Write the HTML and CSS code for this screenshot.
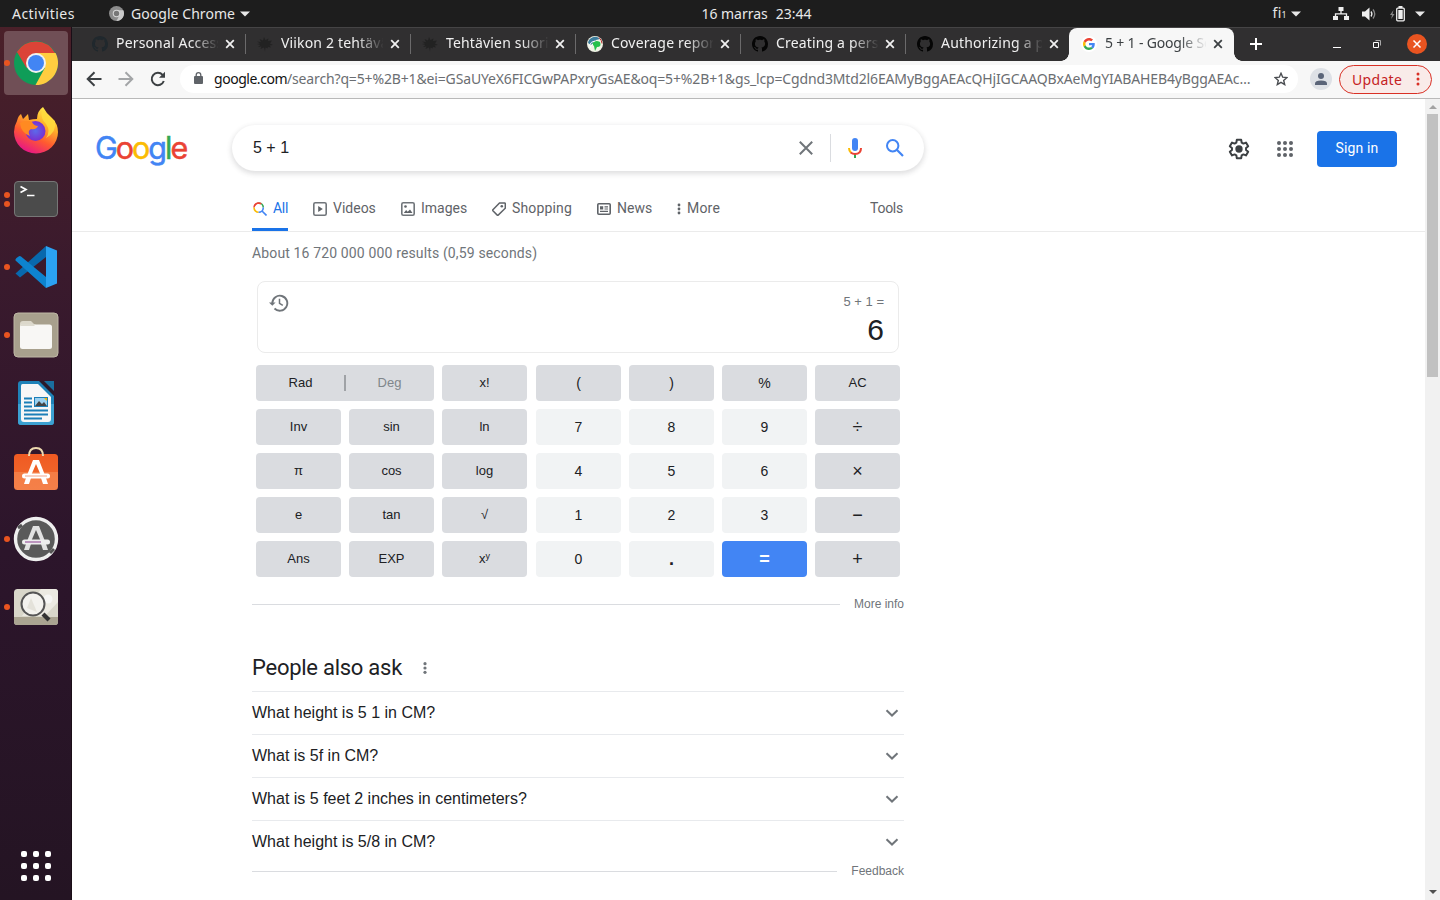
FILE: index.html
```
<!DOCTYPE html>
<html lang="en">
<head>
<meta charset="utf-8">
<title>5 + 1 - Google Search</title>
<link rel="stylesheet" href="styles.css">
</head>
<body>
<svg width="0" height="0" class="defs">
  <defs>
    <symbol id="x" viewBox="0 0 10 10"><path d="M1.200 1.200l7.600 7.600M8.800 1.200L1.200 8.800" stroke="currentColor" stroke-width="1.800" fill="none"/></symbol>
    <symbol id="github" viewBox="0 0 16 16"><path fill="currentColor" d="M8 0C3.58 0 0 3.58 0 8c0 3.54 2.29 6.53 5.47 7.59.4.07.55-.17.55-.38 0-.19-.01-.82-.01-1.49-2.01.37-2.53-.49-2.69-.94-.09-.23-.48-.94-.82-1.13-.28-.15-.68-.52-.01-.53.63-.01 1.08.58 1.23.82.72 1.21 1.87.87 2.33.66.07-.52.28-.87.51-1.07-1.78-.2-3.64-.89-3.64-3.95 0-.87.31-1.59.82-2.15-.08-.2-.36-1.02.08-2.12 0 0 .67-.21 2.2.82.64-.18 1.32-.27 2-.27s1.36.09 2 .27c1.53-1.04 2.2-.82 2.2-.82.44 1.1.16 1.92.08 2.12.51.56.82 1.27.82 2.15 0 3.07-1.87 3.75-3.65 3.95.29.25.54.73.54 1.48 0 1.07-.01 1.93-.01 2.2 0 .21.15.46.55.38A8.01 8.01 0 0016 8c0-4.42-3.58-8-8-8z"/></symbol>
    <symbol id="splat" viewBox="0 0 16 16"><path fill="currentColor" d="M0 5.500l4 .5L2.500 3 6 4.500 7 1l1.500 3 3-1.500L11 5l4-.5-2 3 3 1.500-3.500.5 1.500 2-3-.5-.5 1.500-2-1L8 15.500l-1-4L3.500 13l1-2.500L1 11l2.500-2L0 8l3-.5z"/></symbol>
    <symbol id="chev" viewBox="0 0 14 8"><path d="M1.500 1.200L7 6.500l5.500-5.300" fill="none" stroke="#70757a" stroke-width="2"/></symbol>
    <symbol id="tri" viewBox="0 0 10 6"><path d="M0 .5h10L5 5.500z" fill="currentColor"/></symbol>
    <symbol id="gee" viewBox="0 0 48 48">
      <path fill="#EA4335" d="M24 9.500c3.540 0 6.710 1.220 9.210 3.600l6.850-6.850C35.900 2.380 30.470 0 24 0 14.620 0 6.510 5.380 2.560 13.220l7.980 6.190C12.430 13.720 17.740 9.500 24 9.500z"/>
      <path fill="#4285F4" d="M46.980 24.550c0-1.570-.15-3.090-.38-4.550H24v9.020h12.940c-.58 2.960-2.260 5.480-4.780 7.180l7.730 6c4.510-4.180 7.090-10.360 7.090-17.650z"/>
      <path fill="#FBBC05" d="M10.530 28.590c-.48-1.450-.76-2.990-.76-4.590s.27-3.140.76-4.590l-7.980-6.190C.92 16.460 0 20.120 0 24c0 3.880.92 7.540 2.560 10.780l7.970-6.190z"/>
      <path fill="#34A853" d="M24 48c6.480 0 11.930-2.130 15.890-5.810l-7.730-6c-2.150 1.450-4.920 2.300-8.160 2.300-6.260 0-11.570-4.220-13.470-9.910l-7.980 6.190C6.510 42.620 14.620 48 24 48z"/>
    </symbol>
    <linearGradient id="ff" x1=".8" y1="0" x2=".3" y2="1"><stop offset="0" stop-color="#fff44f"/><stop offset=".35" stop-color="#ffb02a"/><stop offset=".65" stop-color="#ff5a30"/><stop offset="1" stop-color="#e5128c"/></linearGradient>
    <radialGradient id="ffp"><stop offset="0" stop-color="#5b6bea"/><stop offset="1" stop-color="#7a2fd0"/></radialGradient>
    <linearGradient id="store" x1="0" y1="0" x2="0" y2="1"><stop offset="0" stop-color="#f05a22"/><stop offset=".5" stop-color="#f06329"/><stop offset=".51" stop-color="#f47d45"/><stop offset="1" stop-color="#f48049"/></linearGradient>
  </defs>
</svg>

<header class="topbar">
  <div class="tb-left"><span class="activities">Activities</span>
    <svg class="tb-chrome" width="15" height="15" viewBox="0 0 16 16"><circle cx="8" cy="8" r="8" fill="#8c8c8c"/><path d="M8 4.500h7.200A8 8 0 018 16l3-6z" fill="#c9c9c9"/><circle cx="8" cy="8" r="4" fill="#d8d8d8"/><circle cx="8" cy="8" r="2.900" fill="#777"/></svg>
    <span class="appname">Google Chrome</span><svg width="10" height="6"><use href="#tri"/></svg></div>
  <div class="clock"><span>16 marras</span><span>23:44</span></div>
  <div class="tb-right">
    <span class="lang">fi<small>1</small></span><svg class="t1" width="10" height="6"><use href="#tri"/></svg>
    <svg class="net" width="16" height="14" viewBox="0 0 16 14"><path d="M5.500 0h5v4h-5zM0 9h5v4H0zM11 9h5v4h-5z" fill="#eee"/><path d="M8 4v3M2.500 9V6.800h11V9" stroke="#eee" fill="none" stroke-width="1.300"/></svg>
    <svg class="vol" width="15" height="14" viewBox="0 0 15 14"><path d="M0 4.500h3L7.500 .5v13L3 9.500H0z" fill="#eee"/><path d="M9 4.500q1.800 2.500 0 5" stroke="#eee" fill="none" stroke-width="1.300"/><path d="M11 2.500q3.500 4.500 0 9" stroke="#888" fill="none" stroke-width="1.300"/></svg>
    <svg class="bat" width="16" height="16" viewBox="0 0 16 16"><path d="M3.500 4L0 9h2l-.8 4L4.500 8h-2z" fill="#888"/><rect x="6.700" y="2.200" width="7.600" height="12.600" rx="1" fill="none" stroke="#eee" stroke-width="1.300"/><path d="M8.500 0h4v2h-4zM8.300 4h4.400v9H8.300z" fill="#eee"/></svg>
    <svg width="10" height="6"><use href="#tri"/></svg>
  </div>
</header>

<div class="desk">
  <nav class="dock">
    <div class="app on"><i class="dots"><b></b></i>
      <svg width="46" height="46" viewBox="0 0 46 46"><circle cx="23" cy="23" r="22" fill="#0f9d58"/><path d="M23 23L3.900 12A22 22 0 0142.100 13z" fill="#db4437"/><path d="M23 13h19.600A22 22 0 0122.500 45l9.300-17z" fill="#ffcd40"/><path d="M4 12l9.500 16L23 13z" fill="#db4437"/><circle cx="23" cy="23" r="10" fill="#f1f1f1"/><circle cx="23" cy="23" r="8" fill="#4285f4"/></svg></div>
    <div class="app">
      <svg width="46" height="48" viewBox="0 0 46 48"><path d="M4 14q1-5 4-7l2 5 5-5 1 6q4-1 8-1 0-8 6-12 3 6 9 11 6 6 6 14a22 21.500 0 01-44 0q0-6 3-11z" fill="url(#ff)"/><circle cx="22.500" cy="24" r="10" fill="url(#ffp)"/><path d="M7 16q6-4 12-1 2 4 6 4-2 4-7 3-4 2-1 7-9-3-10-13z" fill="#ff8a22"/><path d="M29 3q-2 8 4 14 5 7 0 14 11-6 9-17-5-4-13-11z" fill="#ffdc3d" opacity=".85"/></svg></div>
    <div class="app"><i class="dots"><b></b><b></b></i>
      <svg width="46" height="38" viewBox="0 0 46 38"><rect x="1.500" y="1.500" width="43" height="35" rx="3.500" fill="#4b4b4b" stroke="#777"/><path d="M7.500 6.500l5.500 3-5.500 3" stroke="#fff" stroke-width="1.700" fill="none"/><path d="M14 15.500h7.500" stroke="#fff" stroke-width="1.500"/></svg></div>
    <div class="app"><i class="dots"><b></b></i>
      <svg width="44" height="44" viewBox="0 0 44 44"><path d="M1.500 28.500L32 1v11L6 32.500z" fill="#0868ad"/><path d="M1.500 15.500Q1 14 2.500 13L5 11.300q1-.6 2 .2L32 32v11z" fill="#0d83cf"/><path d="M32 1l11 4.500v33L32 43z" fill="#2ba2f2"/></svg></div>
    <div class="app"><i class="dots"><b></b></i>
      <svg width="46" height="46" viewBox="0 0 46 46"><rect x="1" y="1" width="44" height="44" rx="4" fill="#a8a08d" stroke="#beb7a5"/><path d="M7 12q0-3 3-3h8l4 4v6H7z" fill="#dcd8cb"/><rect x="7" y="12.500" width="32" height="24.500" rx="2.500" fill="#f8f7f5"/><path d="M7 14h14l2-2H9z" fill="#dedbd0"/></svg></div>
    <div class="app">
      <svg width="38" height="46" viewBox="0 0 38 46"><path d="M4 1h19l14 14v27q0 3-3 3H4q-3 0-3-3V4q0-3 3-3z" fill="#1f82b8"/><path d="M1 24v18q0 3 3 3h30q3 0 3-3V24z" fill="#3ca1d2"/><path d="M5.500 4H21l13 13v22q0 3-3 3H7q-3 0-3-3V6q0-2 1.500-2z" fill="#f7f7f7"/><path d="M22 1l15 15V12L26 1z" fill="#2a1a2b"/><path d="M27 1h10v10z" fill="#1a6f9f"/><g stroke="#1b7fb8" stroke-width="1.900"><path d="M7 18.500h8M7 22.500h8M7 26.500h8M7 30.500h24M7 34.500h24M7 38.500h18"/></g><rect x="17.500" y="17.500" width="13" height="9" fill="#9ad0ef" stroke="#1b7fb8"/><path d="M18 26l4-5 3 3 2-2 3 4z" fill="#444"/><path d="M27 18h3v3z" fill="#f4b400"/></svg></div>
    <div class="app">
      <svg class="bag" width="46" height="44" viewBox="0 0 46 44"><rect x="1" y="7" width="44" height="36" rx="3.500" fill="url(#store)"/><path d="M16 9q0-8 7-8t7 8" fill="none" stroke="#ecd9ae" stroke-width="2"/><path d="M20 13h6l5.500 14h-4.200L23 17l-4.300 10h-4.200zM13 31h5l-2 6h-5zM28 31h5l2 6h-5z" fill="#fff"/><rect x="9" y="26.500" width="28" height="5" rx="2.500" fill="#fff"/><path d="M12 29h22" stroke="#f2a58a"/></svg></div>
    <div class="app"><i class="dots"><b></b></i>
      <svg width="46" height="46" viewBox="0 0 46 46"><circle cx="23" cy="23" r="20.500" fill="#5a5a5a" stroke="#efefef" stroke-width="3.400"/><path d="M5 12l4-3M37 37l4-4" stroke="#555" stroke-width="3"/><path d="M20 10h6l5.500 14h-4.200L23 14l-4.300 10h-4.200zM13 28h5l-2 6h-5zM28 28h5l2 6h-5z" fill="#e2e2e2"/><rect x="9" y="23.500" width="28" height="5" rx="2.500" fill="#eee"/><path d="M12 26h16" stroke="#8a3c8f"/></svg></div>
    <div class="app"><i class="dots"><b></b></i>
      <svg width="46" height="38" viewBox="0 0 46 38"><rect x="1" y="1" width="44" height="36" rx="3.500" fill="#d9d7ca"/><path d="M28 1h14q3 0 3 3v10L32 28H9z" fill="#eceae2"/><path d="M1 29h44v5q0 3-3 3H4q-3 0-3-3z" fill="#aaa491"/><circle cx="35" cy="11" r="4.500" fill="#f6f6f4"/><circle cx="20" cy="16" r="11.500" fill="#f3f2ee" stroke="#555" stroke-width="2"/><path d="M30 26l6 6" stroke="#333" stroke-width="4.200"/><path d="M14 20l4-10 6 14z" fill="#e4e2da"/></svg></div>
    <svg class="grid9" width="32" height="32" viewBox="0 0 32 32" fill="#fff"><g id="gr"><rect x="1" y="1" width="6" height="6" rx="2"/><rect x="13" y="1" width="6" height="6" rx="2"/><rect x="25" y="1" width="6" height="6" rx="2"/></g><use href="#gr" y="12"/><use href="#gr" y="24"/></svg>
  </nav>

  <div class="win">
    <div class="tabs">
      <div class="tab"><svg class="fav dim" width="16" height="16"><use href="#github"/></svg><span class="tt">Personal Access</span><svg class="cl" width="10" height="10"><use href="#x"/></svg></div>
      <div class="tab"><svg class="fav dim2" width="16" height="16"><use href="#splat"/></svg><span class="tt">Viikon 2 tehtävä</span><svg class="cl" width="10" height="10"><use href="#x"/></svg></div>
      <div class="tab"><svg class="fav dim2" width="16" height="16"><use href="#splat"/></svg><span class="tt t3">Tehtävien suori</span><svg class="cl" width="10" height="10"><use href="#x"/></svg></div>
      <div class="tab"><svg class="fav" width="16" height="16" viewBox="0 0 16 16"><circle cx="8" cy="8" r="8" fill="#f1f3e6"/><path d="M1 7a7 7 0 0112-4L9 4 4 9z" fill="#3c7d9d"/><path d="M5 8q3-5 8-2 2 5-3 5l-2 4-1-5z" fill="#26c04b"/><path d="M2 10q2-5 6-5M3 12q1-3 3-4" stroke="#fff" fill="none"/><path d="M12 1.500q3 3 3 6" stroke="#b33" fill="none"/></svg><span class="tt">Coverage report</span><svg class="cl" width="10" height="10"><use href="#x"/></svg></div>
      <div class="tab"><svg class="fav blk" width="16" height="16"><use href="#github"/></svg><span class="tt t5">Creating a perso</span><svg class="cl" width="10" height="10"><use href="#x"/></svg></div>
      <div class="tab nos"><svg class="fav blk" width="16" height="16"><use href="#github"/></svg><span class="tt t6">Authorizing a pe</span><svg class="cl" width="10" height="10"><use href="#x"/></svg></div>
      <div class="tab active"><svg class="fav" width="16" height="16" viewBox="0 0 16 16"><circle cx="8" cy="8" r="8" fill="#fff"/><svg x="2" y="2" width="12" height="12"><use href="#gee"/></svg></svg><span class="tt t7">5 + 1 - Google Se</span><svg class="cl" width="10" height="10"><use href="#x"/></svg></div>
      <svg class="plus" width="12" height="12" viewBox="0 0 12 12"><path d="M6 0v12M0 6h12" stroke="#fff" stroke-width="2"/></svg>
      <svg class="wmin" width="8" height="12" viewBox="0 0 8 12"><path d="M0 8.500h8" stroke="#fff"/></svg>
      <svg class="wmax" width="8" height="8" viewBox="0 0 8 8" fill="none"><path d="M.5 2.500h5v5h-5z" stroke="#fff"/><path d="M2.500.5h5v5" stroke="#aaa"/></svg>
      <svg class="wclose" width="20" height="20" viewBox="0 0 20 20"><circle cx="10" cy="10" r="10" fill="#e95420"/><path d="M6.500 6.500l7 7M13.500 6.500l-7 7" stroke="#fff" stroke-width="1.500"/></svg>
    </div>
    <div class="toolbar">
      <svg class="back" width="16" height="16" viewBox="0 0 16 16"><path d="M15.500 8H2M8.500 1.200L1.700 8l6.800 6.800" fill="none" stroke="#3c4043" stroke-width="2"/></svg>
      <svg class="fwd" width="16" height="16" viewBox="0 0 16 16"><path d="M.5 8H14M7.500 1.200L14.300 8l-6.800 6.800" fill="none" stroke="#a3a5a7" stroke-width="2"/></svg>
      <svg class="rel" width="16" height="16" viewBox="0 0 16 16"><path d="M13.800 10A6.200 6.200 0 1112.600 3.800l1.400 1.500" fill="none" stroke="#3c4043" stroke-width="2"/><path d="M15 .8v6H9z" fill="#3c4043"/></svg>
      <div class="omni">
        <svg class="lock" width="9" height="12" viewBox="0 0 9 12"><rect y="4" width="9" height="8" rx="1" fill="#5f6368"/><path d="M2.200 5V3a2.300 2.300 0 014.600 0v2" fill="none" stroke="#5f6368" stroke-width="1.300"/></svg>
        <span class="url"><span class="dom">google.com</span>/search?q=5+%2B+1&amp;ei=GSaUYeX6FICGwPAPxryGsAE&amp;oq=5+%2B+1&amp;gs_lcp=Cgdnd3Mtd2l6EAMyBggAEAcQHjIGCAAQBxAeMgYIABAHEB4yBggAEAc…</span>
        <svg class="star" width="14" height="14" viewBox="0 0 14 14"><path d="M7 1.300l1.700 3.900 4.200.4-3.200 2.800 1 4.200L7 10.400l-3.700 2.200 1-4.200L1.100 5.600l4.200-.4z" fill="none" stroke="#4a4d51" stroke-width="1.400"/></svg>
      </div>
      <svg class="user" width="22" height="22" viewBox="0 0 22 22"><circle cx="11" cy="11" r="11" fill="#dee1e6"/><circle cx="11" cy="8" r="3" fill="#5a6478"/><path d="M5 17v-1.500q0-3 6-3t6 3V17z" fill="#5a6478"/></svg>
      <div class="update"><span>Update</span><svg width="4" height="14" viewBox="0 0 4 14" fill="#d93025"><circle cx="2" cy="2" r="1.500"/><circle cx="2" cy="7" r="1.500"/><circle cx="2" cy="12" r="1.500"/></svg></div>
    </div>
    <div class="view">
      <main class="page">
        <div class="head">
          <div class="logo"><span class="cb">G</span><span class="cr">o</span><span class="cy">o</span><span class="cb">g</span><span class="cg">l</span><span class="cr">e</span></div>
          <div class="search"><span class="q">5 + 1</span>
            <svg width="14" height="14" viewBox="0 0 14 14"><path d="M.8.8l12.400 12.400M13.200.8L.8 13.200" stroke="#70757a" stroke-width="2"/></svg>
            <i class="bar"></i>
            <svg class="mic" width="14" height="20" viewBox="0 0 14 20"><rect x="4" y="0" width="6" height="13" rx="3" fill="#4285f4"/><path d="M6 16h2v4H6z" fill="#34a853"/><path d="M1 10q0 3 2 4.800" stroke="#fbbc04" stroke-width="2" fill="none"/><path d="M2.700 14.500Q4.500 16 7 16q6 0 6-6" stroke="#ea4335" stroke-width="2" fill="none"/></svg>
            <svg class="mag" width="18" height="18" viewBox="0 0 18 18"><circle cx="6.700" cy="6.700" r="5.700" fill="none" stroke="#4285f4" stroke-width="2"/><path d="M10.800 10.800l6.200 6.200" stroke="#4285f4" stroke-width="2.200"/></svg>
          </div>
          <div class="acct">
            <svg width="22" height="22" viewBox="0 0 24 24"><path fill="none" stroke="#3c4043" stroke-width="2.200" stroke-linejoin="round" d="M9.600 2h4.800l.5 3 1.900 1.100 2.800-1.100 2.400 4.100-2.300 1.900v2l2.300 1.900-2.400 4.100-2.800-1.100-1.900 1.100-.5 3H9.600l-.5-3-1.900-1.100L4.400 19 2 14.900 4.300 13v-2L2 9.100 4.400 5l2.800 1.100L9.100 5z"/><circle cx="12" cy="12" r="4" fill="#3c4043"/></svg>
            <svg class="apps" width="16" height="16" viewBox="0 0 16 16" fill="#5f6368"><g id="ag"><circle cx="2" cy="2" r="2"/><circle cx="8" cy="2" r="2"/><circle cx="14" cy="2" r="2"/></g><use href="#ag" y="6"/><use href="#ag" y="12"/></svg>
            <a class="signin">Sign in</a>
          </div>
        </div>
        <div class="nav">
          <a class="n-all"><svg width="14" height="14" viewBox="0 0 14 14" fill="none" stroke-width="1.600"><path d="M1 5.500A4.700 4.700 0 015.700 1" stroke="#ea4335"/><path d="M5.700 1a4.600 4.600 0 014.600 4.600" stroke="#34a853"/><path d="M1 5.500a4.700 4.700 0 004.600 4.800" stroke="#fbbc04"/><path d="M5.600 10.300a4.700 4.700 0 004.700-4.700M9 9l4.500 4.500" stroke="#4285f4"/><path d="M1.500 4a4.700 4.700 0 016.800-2.200" stroke="#ea4335"/></svg><span>All</span></a>
          <a class="n-vid"><svg width="14" height="14" viewBox="0 0 14 14"><rect x=".8" y=".8" width="12.400" height="12.400" rx="1.500" fill="none" stroke="#70757a" stroke-width="1.600"/><path d="M5.200 4l4.600 3-4.600 3z" fill="#5f6368"/></svg><span>Videos</span></a>
          <a class="n-img"><svg width="14" height="14" viewBox="0 0 14 14"><rect x=".8" y=".8" width="12.400" height="12.400" rx="1.500" fill="none" stroke="#70757a" stroke-width="1.600"/><path d="M2.800 11l2.300-3 1.600 1.700L9 7.500l2.500 3.500z" fill="#5f6368"/><circle cx="4.500" cy="4.500" r="1.300" fill="#5f6368"/></svg><span>Images</span></a>
          <a class="n-shop"><svg width="14" height="14" viewBox="0 0 14 14"><path d="M7.500.9l5.200.1q.6 0 .6.700v4.500L6.200 13.100q-.5.300-1 0L.9 8.700q-.4-.5 0-1z" fill="none" stroke="#5f6368" stroke-width="1.500"/><circle cx="9.800" cy="4.300" r="1.300" fill="#5f6368"/></svg><span>Shopping</span></a>
          <a class="n-news"><svg width="14" height="12" viewBox="0 0 14 12"><rect x=".8" y=".8" width="12.400" height="10.400" rx="1" fill="none" stroke="#5f6368" stroke-width="1.600"/><path d="M3 3.200h3.200v3.200H3zM7.500 3.200H11v1.200H7.500zM7.500 5.500H11v1.100H7.500zM3 7.700h8v1.200H3z" fill="#5f6368"/></svg><span>News</span></a>
          <a class="n-more"><svg width="4" height="12" viewBox="0 0 4 12" fill="#5f6368"><circle cx="2" cy="2" r="1.400"/><circle cx="2" cy="6" r="1.400"/><circle cx="2" cy="10" r="1.400"/></svg><span>More</span></a>
          <a class="tools"><span>Tools</span></a>
        </div>
        <div class="col">
          <div class="stats">About 16 720 000 000 results (0,59 seconds)</div>
          <div class="disp">
            <svg width="20" height="18" viewBox="0 0 20 18" fill="none" stroke="#70757a"><path d="M3.300 9A7.500 7.500 0 115.500 14.500" stroke-width="1.900"/><path d="M10.500 4.800v4.500l3.300 2.100" stroke-width="1.500"/><path d="M0 8.500h6.600L3.300 11.800z" fill="#70757a" stroke="none"/></svg>
            <div class="res"><span>5 + 1 =</span><b>6</b></div>
          </div>
          <div class="keys">
            <div class="k rd"><span>Rad</span><i></i><span class="deg">Deg</span></div><div class="k">x!</div><div class="k b">(</div><div class="k b">)</div><div class="k b">%</div><div class="k">AC</div>
            <div class="k">Inv</div><div class="k">sin</div><div class="k">ln</div><div class="k n">7</div><div class="k n">8</div><div class="k n">9</div><div class="k op">÷</div>
            <div class="k">π</div><div class="k">cos</div><div class="k">log</div><div class="k n">4</div><div class="k n">5</div><div class="k n">6</div><div class="k op">×</div>
            <div class="k">e</div><div class="k">tan</div><div class="k">√</div><div class="k n">1</div><div class="k n">2</div><div class="k n">3</div><div class="k op">−</div>
            <div class="k">Ans</div><div class="k">EXP</div><div class="k"><span>x<sup>y</sup></span></div><div class="k n">0</div><div class="k n dot">.</div><div class="k eq">=</div><div class="k op">+</div>
          </div>
          <div class="rule"><i></i><span>More info</span></div>
          <div class="paa"><h2>People also ask</h2><svg width="4" height="12" viewBox="0 0 4 12" fill="#70757a"><circle cx="2" cy="1.700" r="1.600"/><circle cx="2" cy="6" r="1.600"/><circle cx="2" cy="10.300" r="1.600"/></svg></div>
          <div class="qa"><span>What height is 5 1 in CM?</span><svg width="14" height="8"><use href="#chev"/></svg></div>
          <div class="qa"><span>What is 5f in CM?</span><svg width="14" height="8"><use href="#chev"/></svg></div>
          <div class="qa"><span>What is 5 feet 2 inches in centimeters?</span><svg width="14" height="8"><use href="#chev"/></svg></div>
          <div class="qa"><span>What height is 5/8 in CM?</span><svg width="14" height="8"><use href="#chev"/></svg></div>
          <div class="rule fb"><i></i><span>Feedback</span></div>
        </div>
      </main>
      <div class="scroll"><svg width="8" height="4" viewBox="0 0 8 4"><path d="M0 4l4-4 4 4z" fill="#a3a3a3"/></svg><div class="thumb"></div><svg class="dn" width="8" height="4" viewBox="0 0 8 4"><path d="M0 0l4 4 4-4z" fill="#505050"/></svg></div>
    </div>
  </div>
</div>
</body>
</html>
```
FILE: styles.css
```
* { box-sizing: border-box; }
body { margin: 0; width: 1440px; height: 900px; overflow: hidden; display: flex; flex-direction: column; background: #fff; font-family: "Liberation Sans", sans-serif; color: #202124; }
svg { display: block; flex: none; }
.defs { position: absolute; }

/* desktop bar */
.topbar { height: 27px; flex: none; background: #1d1d1d; color: #e8e8e8; font: 14px/25px "Noto Sans", sans-serif; display: grid; grid-template-columns: 665px 150px 1fr; align-items: center; padding-bottom: 1px; }
.tb-left, .tb-right, .clock { display: flex; align-items: center; white-space: nowrap; }
.tb-left { padding-left: 12px; }
.activities { width: 97px; letter-spacing: .45px; }
.appname { margin: 0 5px 0 7px; width: 104px; letter-spacing: .05px; }
.clock { gap: 8px; justify-content: center; padding-left: 33px; }
.tb-right { padding-right: 15px; justify-content: flex-end; }
.lang { letter-spacing: .3px; }
.lang small { font-size: 9px; }
.t1 { margin: 0 32px 0 4px; }
.net { margin-right: 13px; }
.vol { margin-right: 13px; }
.bat { margin-right: 9px; }

/* dock */
.desk { flex: 1; display: flex; min-height: 0; }
.dock { width: 72px; flex: none; background: linear-gradient(#4a2029, #3a1a2d 28%, #2c152b 60%, #241423); padding: 4px 4px 18px; display: flex; flex-direction: column; gap: 4px; border-right: 1px solid #1a0e17; }
.app { width: 64px; height: 64px; border-radius: 4px; display: flex; align-items: center; justify-content: center; position: relative; }
.app.on { background: #704f56; }
.bag { margin-bottom: 4px; }
.dots { position: absolute; left: 0; top: 0; height: 64px; display: flex; flex-direction: column; justify-content: center; gap: 3px; }
.dots b { width: 6px; height: 6px; border-radius: 3px; background: #e95420; }
.grid9 { margin: auto auto 0 16px; }

/* browser window */
.win { flex: 1; display: flex; flex-direction: column; min-width: 0; }
.tabs { height: 34px; flex: none; background: #302f30; border-top: 1px solid #454445; display: flex; align-items: center; padding-left: 8px; color: #f0f0f0; font: 14px/32px "Noto Sans", sans-serif; }
.tab { width: 165px; height: 33px; flex: none; display: flex; align-items: center; padding-left: 12px; padding-bottom: 1px; position: relative; }
.tab:not(.nos):not(.active)::after { content: ""; position: absolute; right: -1px; top: 6px; width: 1px; height: 20px; background: #6b6a6b; }
.tab .tt { width: 102px; height: 32px; margin: -2px 7px 0 8px; overflow: hidden; white-space: nowrap; letter-spacing: .16px; -webkit-mask-image: linear-gradient(90deg, #000 74%, transparent 101%); mask-image: linear-gradient(90deg, #000 74%, transparent 101%); }
.tab .t6 { letter-spacing: .2px; width: 101px; }
.tab .t7 { letter-spacing: -.17px; }
.dim { color: #20282d; }
.dim2 { color: #222; }
.blk { color: #050505; }
.active { background: #f7f7f7; color: #3c4043; border-radius: 8px 8px 0 0; margin-left: -1px; }
.tab.active .tt { width: 101px; }
.active::before { content: ""; position: absolute; left: -8px; bottom: 0; width: 8px; height: 8px; background: radial-gradient(circle at 0 0, transparent 7.500px, #f7f7f7 8px); }
.active::after { content: ""; position: absolute; right: -8px; bottom: 0; width: 8px; height: 8px; background: radial-gradient(circle at 100% 0, transparent 7.500px, #f7f7f7 8px); }
.plus { margin-left: 16px; margin-bottom: 1px; }
.wmin { margin-left: 71px; }
.wmax { margin-left: 32px; margin-bottom: 1px; }
.wclose { margin-left: 26px; margin-bottom: 1px; }

.toolbar { height: 38px; flex: none; background: #f7f7f7; border-bottom: 1px solid #b9b9b9; display: flex; align-items: center; padding: 0 8px 1px 14px; }
.fwd { margin-left: 16px; }
.rel { margin: 0 14px 0 16px; }
.omni { width: 1119px; height: 28px; border-radius: 14px; background: #fff; display: flex; align-items: center; padding-left: 14px; }
.lock { margin-bottom: 2px; }
.url { width: 1037px; margin: -1px 0 0 11px; white-space: nowrap; color: #6b6e72; font: 14px/28px "Noto Sans", sans-serif; letter-spacing: -.15px; }
.dom { color: #111; letter-spacing: -.47px; }
.star { margin-left: 23px; }
.user { margin: 0 7px 0 12px; }
.update { width: 93px; height: 29px; border: 1px solid #d93025; border-radius: 15px; background: #f9ebe9; color: #c5221f; display: flex; align-items: center; justify-content: space-between; padding: 0 11px 0 12px; font: 14px/27px "Noto Sans", sans-serif; letter-spacing: .3px; }

/* page */
.view { flex: 1; display: flex; min-height: 0; }
.page { flex: 1; overflow: hidden; background: #fff; }
.head { height: 98px; display: flex; align-items: flex-start; padding: 26px 28px 0 23px; }
.logo { width: 137px; font: 400 30.500px/46px Inter, sans-serif; letter-spacing: -2px; height: 46px; -webkit-text-stroke: .5px currentColor; }
.logo span { -webkit-text-stroke-color: currentColor; }
.cb { color: #4285f4; }
.cr { color: #ea4335; }
.cy { color: #fbbc05; }
.cg { color: #34a853; }
.search { width: 692px; height: 46px; border-radius: 23px; box-shadow: 0 2px 5px 1px rgba(64,60,67,.16); display: flex; align-items: center; padding: 0 20px 0 21px; }
.q { flex: 1; font-size: 16px; line-height: 46px; }
.bar { width: 1px; height: 28px; background: #dadce0; margin: 0 17px; }
.mag { margin-left: 24px; }
.acct { margin-left: auto; display: flex; align-items: center; height: 48px; }
.apps { margin: 0 24px 0 27px; }
.signin { width: 80px; height: 36px; border-radius: 4px; background: #1a73e8; color: #fff; font: 14px/35px Roboto, sans-serif; letter-spacing: .15px; text-align: center; }
.nav { height: 35px; border-bottom: 1px solid #ebebeb; padding-left: 180px; display: flex; color: #5f6368; font: 14px/24px Roboto, sans-serif; white-space: nowrap; }
.nav a { height: 34px; display: flex; gap: 6px; margin-right: 25px; }
.nav a span { margin-top: -1px; }
.nav svg { margin-top: 5px; }
.nav .n-news svg, .nav .n-more svg { margin-top: 6px; }
.nav .n-all { width: 36px; color: #1a73e8; border-bottom: 3px solid #1a73e8; gap: 7px; letter-spacing: -.3px; }
.nav .n-all svg { margin-left: 1px; margin-right: -1px; }
.n-vid { width: 63px; }
.n-img { width: 66px; }
.n-shop { width: 80px; letter-spacing: .16px; }
.n-news { width: 55px; }
.n-more { width: 43px; letter-spacing: .19px; }
.nav .tools { letter-spacing: -.26px; margin: 0 0 0 125px; }
.col { margin-left: 180px; width: 652px; }
.stats { height: 49px; font: 14px/42px Roboto, sans-serif; color: #70757a; letter-spacing: .14px; }
.disp { margin: 0 5px 12px; height: 72px; border: 1px solid #ebebeb; border-radius: 8px; display: flex; justify-content: space-between; padding: 12px 14px 0 11px; }
.res { display: flex; flex-direction: column; align-items: flex-end; }
.res span { font-size: 13px; line-height: 16px; color: #70757a; }
.res b { font: 30px/40px "Liberation Sans", sans-serif; color: #202124; }
.keys { margin: 0 4px; display: grid; grid-template-columns: 93px 93px 94px 93px 93px 93px 85px; row-gap: 8px; }
.k { width: 85px; height: 36px; border-radius: 4px; background: #dadce0; display: flex; align-items: center; justify-content: center; font-size: 13px; line-height: 36px; }
.rd { grid-column: span 2; width: 178px; justify-content: flex-start; }
.rd span { width: 89px; text-align: center; }
.rd i { width: 2px; height: 16px; margin: 0 -1px; background: #9fa2a6; }
.rd span.deg { color: #80868b; }
.k.b { font-size: 14px; }
.k.n { background: #f1f3f4; font-size: 14px; }
.k.dot { font-size: 18px; font-weight: bold; }
.k.op { font-size: 18px; padding-bottom: 1px; }
.k.eq { background: #4285f4; color: #fff; font-weight: bold; font-size: 18px; padding-bottom: 1px; }
.k sup { font-size: 9px; line-height: 0; vertical-align: 4px; }
.rule { display: flex; align-items: center; margin-top: 19px; height: 16px; font-size: 12px; color: #70757a; }
.rule i { flex: 1; height: 1px; background: #dadce0; margin-right: 14px; }
.paa { display: flex; align-items: center; height: 47px; margin-top: 32px; }
.paa h2 { margin: 1px 0 0; font: 22px/46px Roboto, sans-serif; width: 150px; letter-spacing: -.26px; white-space: nowrap; }
.paa svg { margin-left: 21px; }
.qa { height: 43px; border-top: 1px solid #e8eaed; display: flex; align-items: center; justify-content: space-between; font-size: 16px; padding: 0 5px 1px 0; }
.fb { margin-top: 0; }
.scroll { width: 15px; background: #f1f1f1; display: flex; flex-direction: column; align-items: center; padding: 6px 0; }
.thumb { width: 11px; height: 263px; background: #c1c1c1; margin-top: 5px; }
.dn { margin-top: auto; }
```
